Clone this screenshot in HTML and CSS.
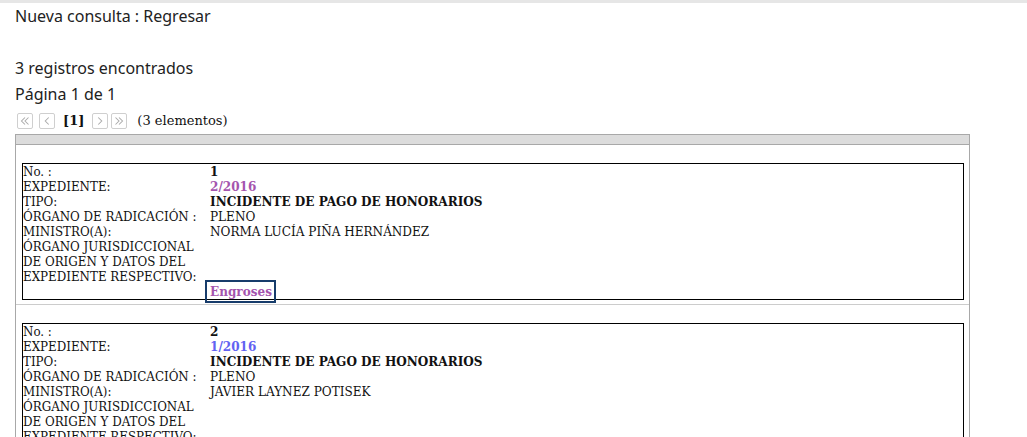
FILE: index.html
```html
<!DOCTYPE html>
<html lang="es">
<head>
<meta charset="utf-8">
<title>Consulta</title>
<link rel="stylesheet" href="styles.css">
</head>
<body>
<div class="topbar"></div>
<div class="main">
  <div class="nav">Nueva consulta : Regresar</div>
  <div class="blank"></div>
  <div class="line">3 registros encontrados</div>
  <div class="line">Página 1 de 1</div>
  <div class="pager">
    <span class="pbtn pb1"><svg viewBox="0 0 16 16" width="14" height="14"><polyline points="8,4 4,8 8,12" /><polyline points="12,4 8,8 12,12" /></svg></span>
    <span class="pbtn pb2"><svg viewBox="0 0 16 16" width="14" height="14"><polyline points="10,4 6,8 10,12" /></svg></span>
    <span class="cur">[1]</span>
    <span class="pbtn pb3"><svg viewBox="0 0 16 16" width="14" height="14"><polyline points="6,4 10,8 6,12" /></svg></span>
    <span class="pbtn pb4"><svg viewBox="0 0 16 16" width="14" height="14"><polyline points="4,4 8,8 4,12" /><polyline points="8,4 12,8 8,12" /></svg></span>
    <span class="count">(3 elementos)</span>
  </div>
  <div class="results">
    <div class="rhead"></div>
    <div class="row">
      <div class="card">
        <div class="lbl">No. :</div><div class="val b">1</div>
        <div class="lbl">EXPEDIENTE:</div><div class="val b visited">2/2016</div>
        <div class="lbl">TIPO:</div><div class="val b">INCIDENTE DE PAGO DE HONORARIOS</div>
        <div class="lbl">ÓRGANO DE RADICACIÓN :</div><div class="val">PLENO</div>
        <div class="lbl">MINISTRO(A):</div><div class="val">NORMA LUCÍA PIÑA HERNÁNDEZ</div>
        <div class="lbl">ÓRGANO JURISDICCIONAL<br>DE ORIGEN Y DATOS DEL<br>EXPEDIENTE RESPECTIVO:</div><div class="val"></div>
        <div class="lbl"></div><div class="val"><a class="eng">Engroses</a></div>
      </div>
    </div>
    <div class="row">
      <div class="card">
        <div class="lbl">No. :</div><div class="val b">2</div>
        <div class="lbl">EXPEDIENTE:</div><div class="val b link">1/2016</div>
        <div class="lbl">TIPO:</div><div class="val b">INCIDENTE DE PAGO DE HONORARIOS</div>
        <div class="lbl">ÓRGANO DE RADICACIÓN :</div><div class="val">PLENO</div>
        <div class="lbl">MINISTRO(A):</div><div class="val">JAVIER LAYNEZ POTISEK</div>
        <div class="lbl">ÓRGANO JURISDICCIONAL<br>DE ORIGEN Y DATOS DEL<br>EXPEDIENTE RESPECTIVO:</div><div class="val"></div>
        <div class="lbl"></div><div class="val"><a class="eng">Engroses</a></div>
      </div>
    </div>
  </div>
</div>
</body>
</html>
```
FILE: styles.css
```css
html, body {
  margin: 0;
  padding: 0;
  background: #fff;
}
.topbar {
  height: 3px;
  background: #e6e6e6;
}
.main {
  padding: 0 0 0 15px;
  font-family: "Noto Sans", sans-serif;
  font-size: 16px;
  line-height: 26px;
  color: #222;
}
.blank {
  height: 26px;
}
.pager {
  display: flex;
  align-items: center;
  height: 17px;
  margin-top: 5px;
  padding-left: 2px;
  font-family: "DejaVu Serif", serif;
  font-size: 13px;
  line-height: 17px;
  color: #111;
}
.pbtn {
  box-sizing: border-box;
  width: 16px;
  height: 16px;
  border: 1px solid #cfcfcf;
  border-radius: 2px;
  display: flex;
  align-items: center;
  justify-content: center;
}
.pbtn svg polyline {
  fill: none;
  stroke: #aaa;
  stroke-width: 1.2;
}
.pb2 { margin-left: 6px; }
.cur {
  font-weight: bold;
  margin: 0 8px;
}
.pb4 { margin-left: 3px; }
.count { margin-left: 10px; }
.results {
  width: 955px;
  box-sizing: border-box;
  margin-top: 5px;
  border: 1px solid #a8a8a8;
  border-bottom: none;
}
.rhead {
  height: 9px;
  background: #dcdcdc;
  border-bottom: 1px solid #a8a8a8;
}
.row {
  padding: 18px 5px 4px 6px;
  border-bottom: 1px solid #cccccc;
}
.card {
  border: 1px solid #000;
  display: grid;
  grid-template-columns: 187px 1fr;
  font-family: "DejaVu Serif Condensed", "DejaVu Serif", serif;
  font-stretch: condensed;
  font-size: 13.2px;
  line-height: 15px;
  color: #111;
}
.val {
  font-size: 13.4px;
}
.val.b {
  font-weight: bold;
}
.visited, .eng {
  color: #a555ae;
}
.link {
  color: #6262f2;
}
.eng {
  font-weight: bold;
  padding: 1px 2px 2px 3px;
  margin-left: -3px;
  outline: 2px solid #173c6b;
  outline-offset: 0;
}
```
